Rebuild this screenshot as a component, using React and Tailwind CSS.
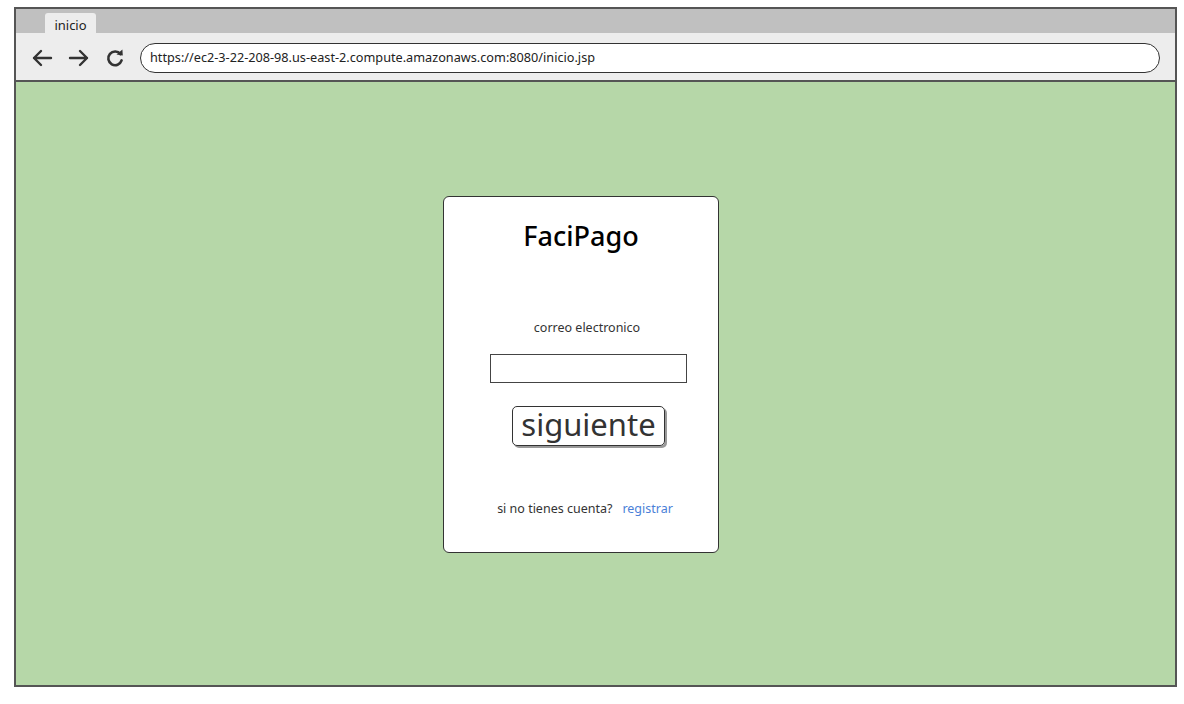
import React from "react";

function RefreshIcon() {
  return (
    <svg width="20" height="20" viewBox="0 0 20 20" fill="none">
      <path d="M15.5 6.2A6.8 6.8 0 1 0 16.6 12.4" stroke="#333" strokeWidth="2.6" strokeLinecap="round" />
      <path d="M11.5 6.6L17.8 7.4L17.4 1.6Z" fill="#333" />
    </svg>
  );
}

function Arrow({ dir }) {
  return (
    <svg width="22" height="20" viewBox="0 0 22 20" fill="none" className={dir === "left" ? "" : "rotate-180"}>
      <path d="M20 10H3M10 3L3 10L10 17" stroke="#333" strokeWidth="2.4" strokeLinecap="round" strokeLinejoin="round" />
    </svg>
  );
}

export default function App() {
  return (
    <div className="w-[1184px] h-[704px] bg-white pl-[14px] pt-[7px] font-['Noto_Sans',sans-serif] text-[#222]">
      <div className="w-[1163px] h-[680px] border-2 border-[#555] flex flex-col overflow-hidden">
        {/* tab bar */}
        <div className="h-[24px] bg-[#c0c0c0] flex items-end pl-[29px]">
          <div className="w-[51px] h-[20px] bg-[#ededed] rounded-t-[3px] flex items-center justify-center text-[13px] leading-none pt-[5px]">
            inicio
          </div>
        </div>
        {/* toolbar */}
        <div className="h-[49px] bg-[#ededed] border-b-2 border-[#555] flex items-center pl-[15px] pr-[15px] pt-[2px]">
          <Arrow dir="left" />
          <div className="ml-[15px]">
            <Arrow dir="right" />
          </div>
          <div className="ml-[15px]">
            <RefreshIcon />
          </div>
          <div className="ml-[15px] flex-1 h-[30px] bg-white border-[1.5px] border-[#333] rounded-full flex items-center pl-[9px] text-[12.7px]">
            https://ec2-3-22-208-98.us-east-2.compute.amazonaws.com:8080/inicio.jsp
          </div>
        </div>
        {/* content */}
        <div className="flex-1 bg-[#b6d7a8] pt-[114px] pl-[427px]">
          <div className="w-[276px] h-[357px] bg-white border-[1.5px] border-[#333] rounded-[6px] flex flex-col items-center">
            <div className="mt-[21px] h-[36px] flex items-center text-[27px] font-medium text-black">FaciPago</div>
            <div className="mt-[65px] ml-[12px] h-[18px] flex items-center text-[12.5px] text-[#333]">correo electronico</div>
            <div className="mt-[17px] ml-[15px] w-[197px] h-[29px] border-[1.5px] border-[#444]"></div>
            <button className="mt-[23px] ml-[15px] w-[153px] h-[40px] border-[1.5px] border-[#333] rounded-[5px] shadow-[2px_2px_0_#999] flex items-center justify-center text-[31px] text-[#333] leading-none pb-[3px]">
              siguiente
            </button>
            <div className="mt-[54px] ml-[8px] h-[18px] flex items-center text-[12.5px] text-[#333]">
              si no tienes cuenta?
              <span className="ml-[10px] text-[#4a7fd8]">registrar</span>
            </div>
          </div>
        </div>
      </div>
    </div>
  );
}
